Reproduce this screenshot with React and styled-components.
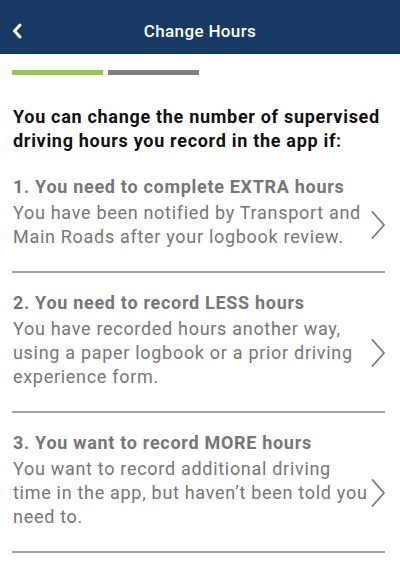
import React from 'react';
import styled, { createGlobalStyle } from 'styled-components';

const GlobalStyle = createGlobalStyle`
  body {
    margin: 0;
    background: #ffffff;
    font-family: Roboto, "Noto Sans", Arial, sans-serif;
  }
`;

const Screen = styled.div`
  width: 400px;
  min-height: 567px;
  background: #ffffff;
`;

const Header = styled.header`
  height: 54px;
  box-sizing: border-box;
  padding-top: 8px;
  background: #173a65;
  display: flex;
  align-items: center;
  justify-content: center;
  position: relative;
`;

const BackButton = styled.button`
  position: absolute;
  left: 8px;
  top: 8px;
  bottom: 0;
  background: none;
  border: none;
  padding: 0 4px;
  display: flex;
  align-items: center;
  cursor: pointer;
`;

const Title = styled.h1`
  margin: 0;
  color: #ffffff;
  font-size: 17px;
  letter-spacing: 0.35px;
  font-weight: 500;
`;

const Content = styled.main`
  padding: 16px 15px 0 12px;
`;

const Progress = styled.div`
  display: flex;
  gap: 5px;
`;

const Step = styled.div`
  width: 91px;
  height: 5px;
  background: ${({ active }) => (active ? '#9ac451' : '#7f7f7f')};
`;

const Intro = styled.p`
  margin: 30px 0 22px 1px;
  font-size: 18px;
  line-height: 24px;
  letter-spacing: 0.7px;
  font-weight: 700;
  color: #111111;
`;

const Option = styled.button`
  width: 100%;
  display: block;
  background: none;
  border: none;
  border-bottom: 2px solid #a3a3a3;
  padding: ${({ first }) => (first ? '0' : '18px')} 0 22px 1px;
  margin: 0;
  text-align: left;
  font-family: inherit;
  color: #767676;
  cursor: pointer;
`;

const OptionTitle = styled.div`
  font-size: 18px;
  line-height: 24px;
  letter-spacing: 0.7px;
  font-weight: 700;
  margin-bottom: 2px;
`;

const OptionRow = styled.div`
  display: flex;
  align-items: center;
  gap: 1px;
`;

const OptionBody = styled.div`
  flex: 1;
  font-size: 18px;
  line-height: 24px;
  letter-spacing: 0.7px;
  font-weight: 400;
`;

const Chevron = () => (
  <svg width="14" height="30" viewBox="0 0 14 30" fill="none">
    <path d="M1.5 2 L13 15 L1.5 28" stroke="#777777" strokeWidth="1.8" strokeLinecap="round" strokeLinejoin="round" />
  </svg>
);

const options = [
  {
    title: '1. You need to complete EXTRA hours',
    body: 'You have been notified by Transport and Main Roads after your logbook review.',
  },
  {
    title: '2. You need to record LESS hours',
    body: 'You have recorded hours another way, using a paper logbook or a prior driving experience form.',
  },
  {
    title: '3. You want to record MORE hours',
    body: 'You want to record additional driving time in the app, but haven\u2019t been told you need to.',
  },
];

export default function App() {
  return (
    <Screen>
      <GlobalStyle />
      <Header>
        <BackButton aria-label="Back">
          <svg width="10" height="16" viewBox="0 0 10 16" fill="none">
            <path d="M8 2 L2.5 8 L8 14" stroke="#ffffff" strokeWidth="3" strokeLinecap="round" strokeLinejoin="round" />
          </svg>
        </BackButton>
        <Title>Change Hours</Title>
      </Header>
      <Content>
        <Progress>
          <Step active />
          <Step />
        </Progress>
        <Intro>You can change the number of supervised driving hours you record in the app if:</Intro>
        {options.map((o, i) => (
          <Option key={o.title} first={i === 0}>
            <OptionTitle>{o.title}</OptionTitle>
            <OptionRow>
              <OptionBody>{o.body}</OptionBody>
              <Chevron />
            </OptionRow>
          </Option>
        ))}
      </Content>
    </Screen>
  );
}
